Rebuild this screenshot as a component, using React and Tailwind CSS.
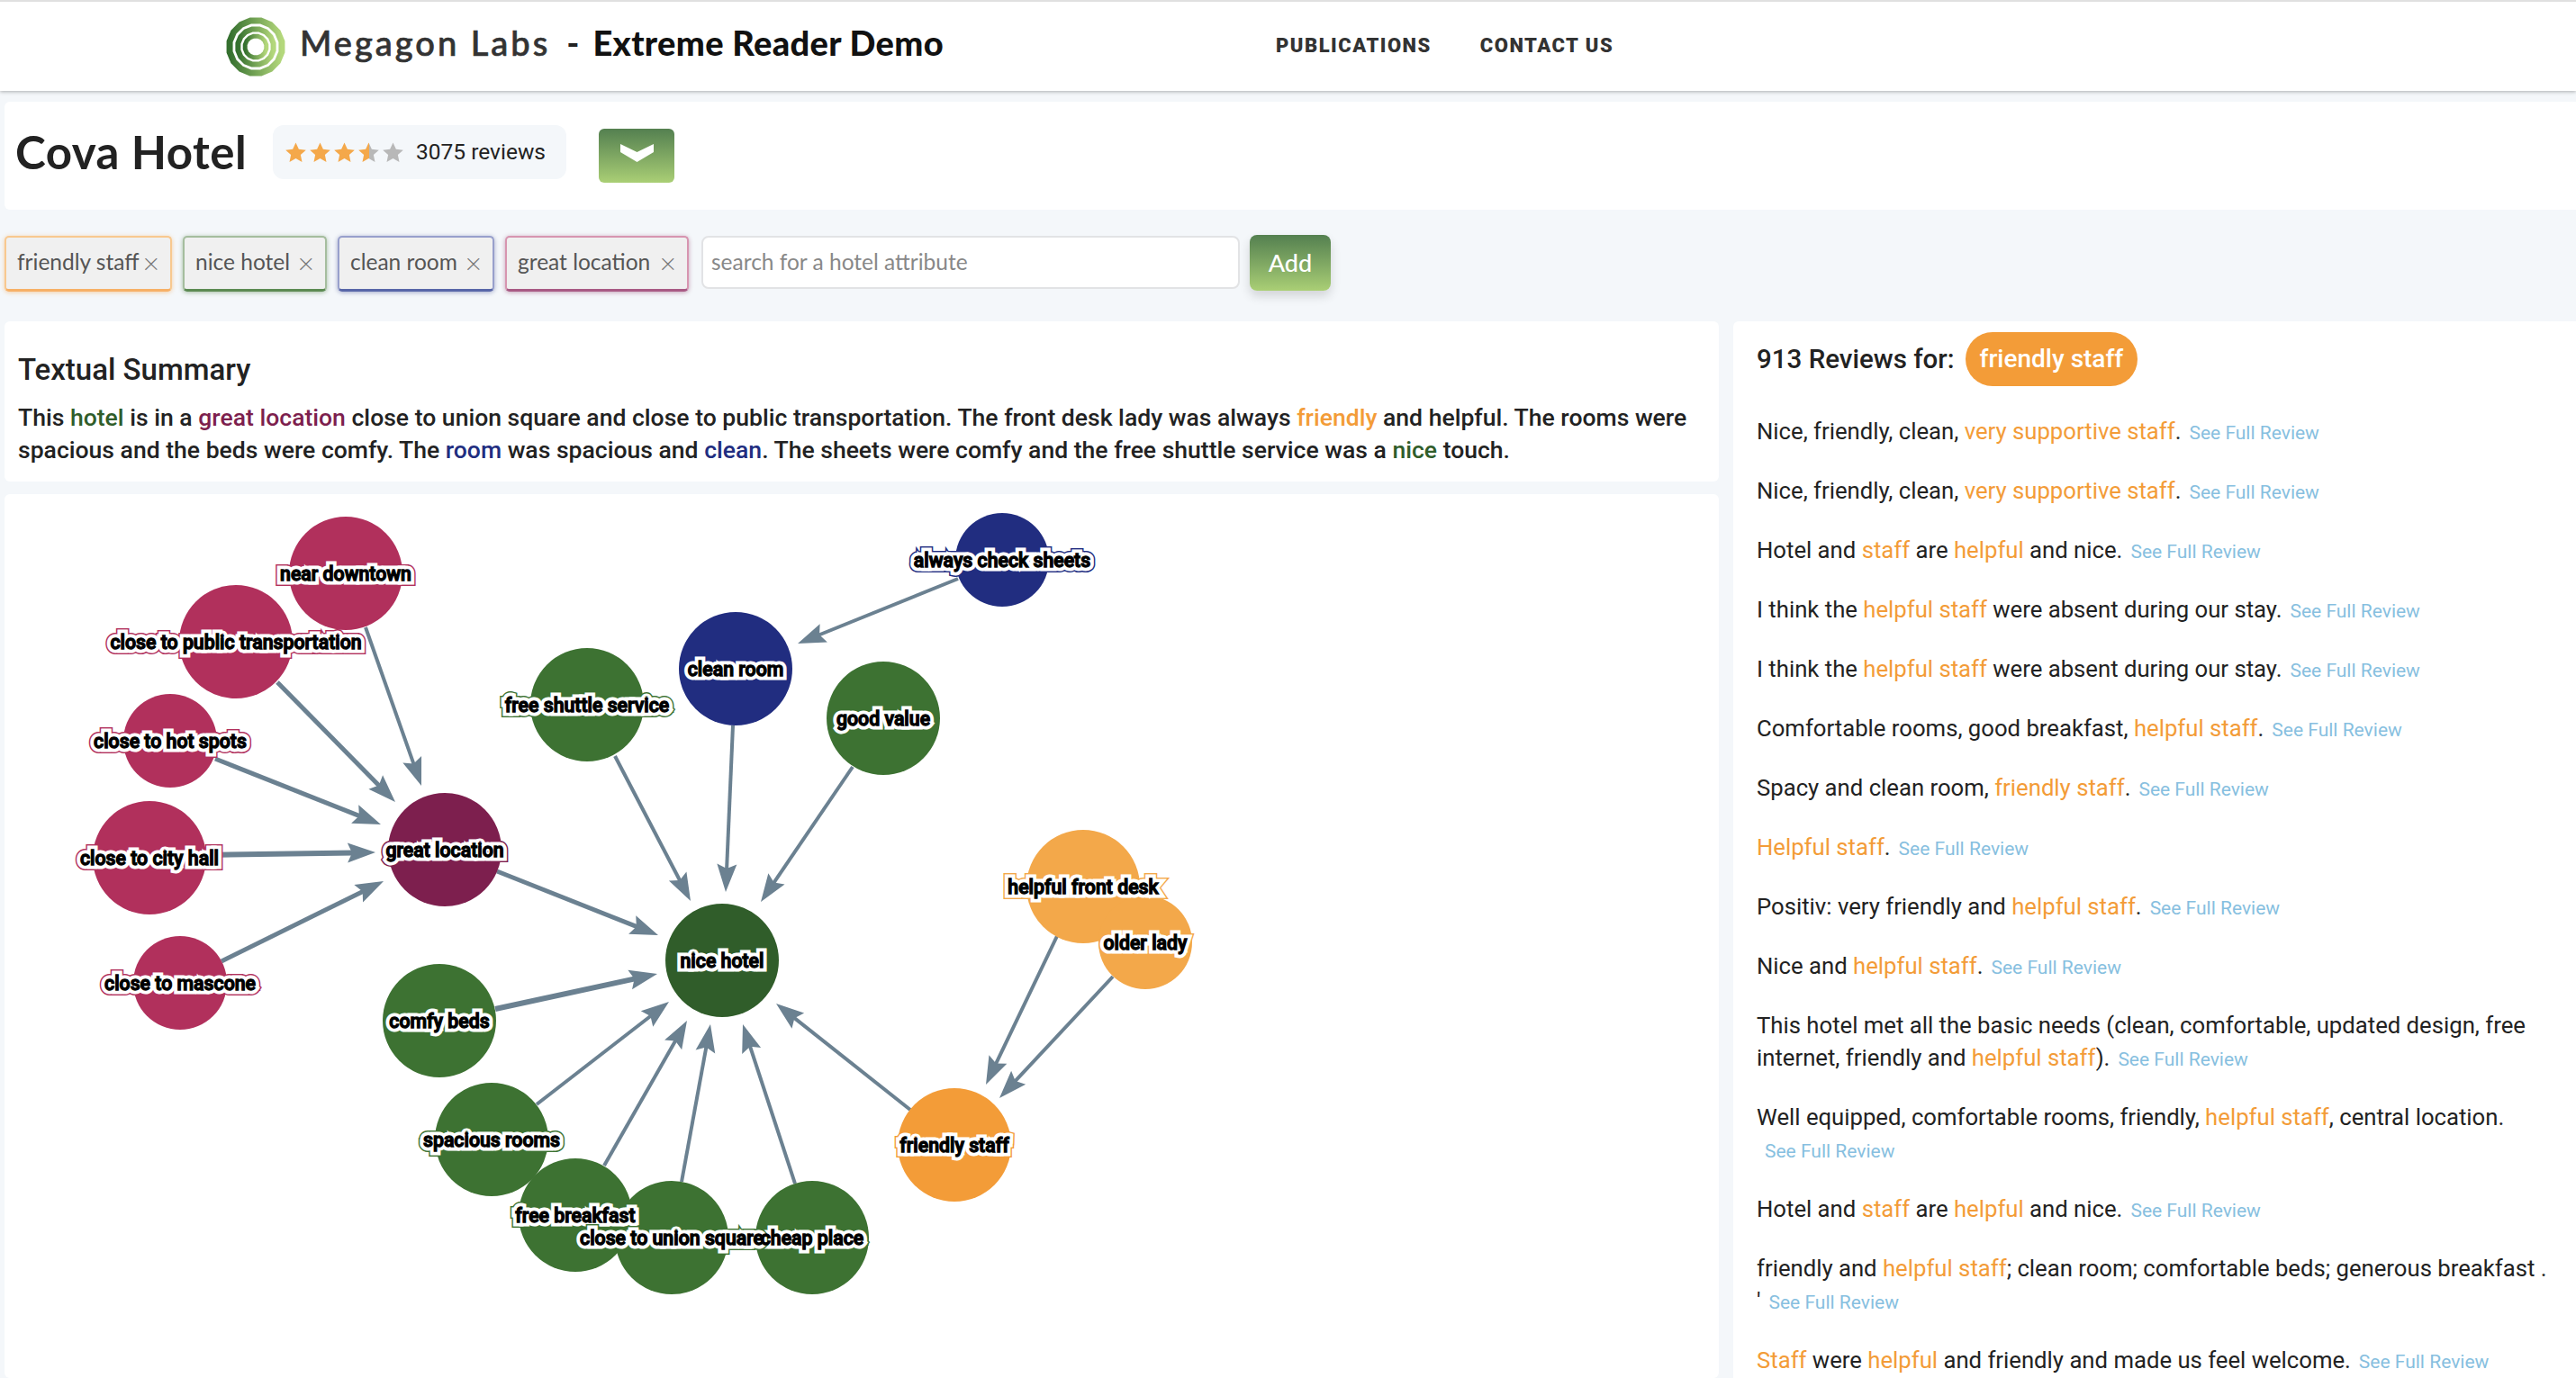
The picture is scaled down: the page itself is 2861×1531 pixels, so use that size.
import { Fragment } from 'react'

const ROSE = '#b1305c'
const WINE = '#7d1f4e'
const GREEN = '#3d7232'
const FOREST = '#305d2a'
const NAVY = '#212d80'
const AMBER = '#f3a84a'
const ORANGE = '#f39c38'

const nodes = [
  { label: 'always check sheets', x: 1113, y: 622, r: 52, fill: NAVY },
  { label: 'near downtown', x: 384, y: 637, r: 63, fill: ROSE },
  { label: 'close to public transportation', x: 262, y: 713, r: 63, fill: ROSE },
  { label: 'clean room', x: 817, y: 743, r: 63, fill: NAVY },
  { label: 'free shuttle service', x: 652, y: 783, r: 63, fill: GREEN },
  { label: 'good value', x: 981, y: 798, r: 63, fill: GREEN },
  { label: 'close to hot spots', x: 189, y: 823, r: 52, fill: ROSE },
  { label: 'great location', x: 494, y: 944, r: 63, fill: WINE },
  { label: 'close to city hall', x: 166, y: 953, r: 63, fill: ROSE },
  { label: 'helpful front desk', x: 1203, y: 985, r: 63, fill: AMBER },
  { label: 'older lady', x: 1272, y: 1047, r: 52, fill: AMBER },
  { label: 'nice hotel', x: 802, y: 1067, r: 63, fill: FOREST },
  { label: 'close to mascone', x: 200, y: 1092, r: 52, fill: ROSE },
  { label: 'comfy beds', x: 488, y: 1134, r: 63, fill: GREEN },
  { label: 'spacious rooms', x: 546, y: 1266, r: 63, fill: GREEN },
  { label: 'friendly staff', x: 1060, y: 1272, r: 63, fill: ORANGE },
  { label: 'free breakfast', x: 639, y: 1350, r: 63, fill: GREEN },
  { label: 'cheap place', x: 902, y: 1375, r: 63, fill: GREEN },
  { label: 'close to union square', x: 746, y: 1375, r: 63, fill: GREEN },
]

// start x, start y, tip x, tip y, stroke width
const edges = [
  [406, 697, 468, 873, 4],
  [308, 758, 439, 891, 5],
  [239, 843, 423, 916, 5],
  [228, 950, 417, 947, 6],
  [246, 1068, 426, 979, 5],
  [552, 968, 731, 1039, 5],
  [550, 1121, 730, 1082, 6],
  [596, 1227, 743, 1113, 4],
  [671, 1295, 763, 1134, 4],
  [757, 1313, 789, 1138, 4],
  [883, 1315, 825, 1138, 4],
  [1011, 1233, 862, 1115, 4],
  [1174, 1040, 1095, 1205, 4],
  [1236, 1085, 1110, 1220, 4],
  [683, 840, 767, 1001, 4],
  [814, 806, 806, 991, 4],
  [947, 852, 845, 1002, 4],
  [1064, 643, 886, 715, 4],
]

const reviews = [
  'Nice, friendly, clean, *very supportive staff*.',
  'Nice, friendly, clean, *very supportive staff*.',
  'Hotel and *staff* are *helpful* and nice.',
  'I think the *helpful staff* were absent during our stay.',
  'I think the *helpful staff* were absent during our stay.',
  'Comfortable rooms, good breakfast, *helpful staff*.',
  'Spacy and clean room, *friendly staff*.',
  '*Helpful staff*.',
  'Positiv: very friendly and *helpful staff*.',
  'Nice and *helpful staff*.',
  'This hotel met all the basic needs (clean, comfortable, updated design, free internet, friendly and *helpful staff*).',
  'Well equipped, comfortable rooms, friendly, *helpful staff*, central location.',
  'Hotel and *staff* are *helpful* and nice.',
  "friendly and *helpful staff*; clean room; comfortable beds; generous breakfast . '",
  '*Staff* were *helpful* and friendly and made us feel welcome.',
]

const tags = [
  { label: 'friendly staff', className: 'w-[186px] border-[#f8c88f] border-b-[#f7b066] shadow-[0_1px_5px_rgba(243,156,56,0.45)]' },
  { label: 'nice hotel', className: 'w-[160px] border-[#a5bd9e] border-b-[#5c8a52] shadow-[0_1px_5px_rgba(61,114,50,0.45)]' },
  { label: 'clean room', className: 'w-[174px] border-[#98a0cc] border-b-[#5866a8] shadow-[0_1px_5px_rgba(33,45,128,0.4)]' },
  { label: 'great location', className: 'w-[204px] border-[#d795b0] border-b-[#a85a84] shadow-[0_1px_5px_rgba(125,31,78,0.4)]' },
]

function Logo() {
  const ring = (r) => {
    const pts = []
    for (let i = 0; i < 16; i++) {
      const a = ((i + 0.5) * Math.PI) / 8
      pts.push(`${(33 + r * Math.cos(a)).toFixed(2)},${(33 + r * Math.sin(a)).toFixed(2)}`)
    }
    return pts.join(' ')
  }
  return (
    <svg className="w-[66px] h-[66px] shrink-0" viewBox="0 0 66 66">
      <defs>
        <linearGradient id="logoFade" x1="0" y1="0" x2="1" y2="0">
          <stop offset="0" stopColor="#35702f" />
          <stop offset="1" stopColor="#b4d87c" />
        </linearGradient>
      </defs>
      <polygon points={ring(29.5)} fill="none" stroke="url(#logoFade)" strokeWidth="7" />
      <polygon points={ring(20)} fill="none" stroke="url(#logoFade)" strokeWidth="6" />
      <polygon points={ring(12)} fill="none" stroke="url(#logoFade)" strokeWidth="5" />
    </svg>
  )
}

function Star({ fill }) {
  return (
    <svg className="w-[23px] h-[23px]" viewBox="0 0 24 24">
      <defs>
        <linearGradient id="halfStar" x1="0" y1="0" x2="1" y2="0">
          <stop offset="0.5" stopColor="#f4a84a" />
          <stop offset="0.5" stopColor="#b8b8b8" />
        </linearGradient>
      </defs>
      <polygon points="12,0.5 15.5,8.2 23.8,9.1 17.6,14.7 19.3,23 12,18.8 4.7,23 6.4,14.7 0.2,9.1 8.5,8.2" fill={fill} />
    </svg>
  )
}

function Edge({ edge }) {
  const [x1, y1, x2, y2, width] = edge
  const len = Math.hypot(x2 - x1, y2 - y1)
  const ux = (x2 - x1) / len
  const uy = (y2 - y1) / len
  const at = (back, side) => `${x2 - ux * back - uy * side},${y2 - uy * back + ux * side}`
  return (
    <g>
      <line x1={x1} y1={y1} x2={x2 - ux * 24} y2={y2 - uy * 24} stroke="#6b8191" strokeWidth={width} />
      <polygon points={`${at(0, 0)} ${at(31, 11)} ${at(26, 0)} ${at(31, -11)}`} fill="#6b8191" />
    </g>
  )
}

function Graph() {
  return (
    <svg className="block w-[1904px] h-[982px]" viewBox="5 549 1904 982">
      {edges.map((edge, i) => <Edge key={i} edge={edge} />)}
      {nodes.map((node) => <circle key={node.label} cx={node.x} cy={node.y} r={node.r} fill={node.fill} />)}
      <g
        className="font-['Roboto',sans-serif] font-medium text-[21.3px]"
        textAnchor="middle"
        dominantBaseline="central"
        strokeLinejoin="miter"
        strokeMiterlimit="8"
      >
        {/* halos are clones of the real text further down, so labels sit on top of every halo */}
        {nodes.map((node, i) => (
          <g key={node.label}>
            <use href={`#node-label-${i}`} fill="none" stroke={node.fill} strokeWidth="12" />
            <use href={`#node-label-${i}`} fill="none" stroke="#ffffff" strokeWidth="9" />
          </g>
        ))}
        <g fill="#000000" stroke="#000000" strokeWidth="1.3">
          {nodes.map((node, i) => (
            <text key={node.label} id={`node-label-${i}`} x={node.x} y={node.y}>{node.label}</text>
          ))}
        </g>
      </g>
    </svg>
  )
}

function Review({ text }) {
  const parts = text.split('*')
  return (
    <p className="mb-[30px] leading-[36px] text-[25.7px] text-[#222222]">
      {parts.map((part, i) => (
        <Fragment key={i}>
          {i % 2 === 1 ? <span className="text-[#f39c38]">{part}</span> : part}
        </Fragment>
      ))}
      <a className="inline-block whitespace-nowrap ml-[9px] text-[21px] leading-none text-[#87bfe0]">See Full Review</a>
    </p>
  )
}

export default function App() {
  return (
    <div className="h-screen overflow-hidden bg-[#f4f7fa] font-['Roboto',sans-serif]">
      <header className="h-[101px] border-t-2 border-[#e0e0e0] bg-white shadow-[0_1px_4px_rgba(0,0,0,0.3)] flex items-center pl-[251px]">
        <Logo />
        <div className="ml-[16px] pb-[8px] font-['Lato',sans-serif] text-[38px] text-[#333333] tracking-[3px] font-medium [-webkit-text-stroke:0.7px_#333333]">Megagon Labs</div>
        <div className="ml-[18px] pb-[8px] font-['Lato',sans-serif] text-[38px] text-[#222222] font-bold">-</div>
        <div className="ml-[15px] pb-[8px] font-['Lato',sans-serif] text-[38px] text-[#111111] font-black tracking-[0.35px]">Extreme Reader Demo</div>
        <nav className="ml-[369px] pb-[3px] flex gap-[54px] text-[22px] font-black tracking-[1.5px] text-[#333333]">
          <span>PUBLICATIONS</span>
          <span>CONTACT US</span>
        </nav>
      </header>

      <section className="mt-[12px] ml-[5px] h-[120px] bg-white rounded-l-md flex items-start pl-[12px]">
        <h1 className="mt-[20px] w-[286px] font-['Lato',sans-serif] text-[51px] tracking-[0.5px] leading-[72px] font-bold text-[#222222]">Cova Hotel</h1>
        <div className="mt-[26px] w-[326px] h-[60px] bg-[#f4f7fa] rounded-xl flex items-center pl-[14px]">
          <div className="flex gap-[4px]">
            <Star fill="#f4a84a" />
            <Star fill="#f4a84a" />
            <Star fill="#f4a84a" />
            <Star fill="url(#halfStar)" />
            <Star fill="#b8b8b8" />
          </div>
          <span className="ml-[14px] text-[24.5px] text-[#222222]">3075 reviews</span>
        </div>
        <button className="ml-[36px] mt-[30px] pb-[6px] w-[84px] h-[60px] rounded-md bg-linear-to-b from-[#548050] to-[#aacf75] flex items-center justify-center">
          <svg className="w-[37px] h-[20px]" viewBox="0 0 37 20">
            <polygon points="0,0 18.5,9 37,0 37,9 18.5,20 0,9" fill="#ffffff" />
          </svg>
        </button>
      </section>

      <section className="mt-[29px] ml-[5px] flex items-start gap-[12px] font-['Lato',sans-serif] text-[24.5px]">
        {tags.map((tag) => (
          <div key={tag.label} className={`h-[62px] px-[12px] pb-[2px] flex items-center justify-between rounded-[5px] bg-[#f0f0f0] border-2 border-b-[3px] text-[#555555] ${tag.className}`}>
            <span>{tag.label}</span>
            <span className="text-[32px] leading-none font-light text-[#777777]">×</span>
          </div>
        ))}
        <div className="ml-[2px] w-[598px] h-[59px] rounded-lg bg-white border-2 border-[#e2e3e5] flex items-center pl-[9px] text-[#888888]">
          search for a hotel attribute
        </div>
        <button className="-ml-[1px] w-[90px] h-[62px] -mt-[1px] rounded-lg bg-linear-to-b from-[#548050] to-[#aacf75] text-white text-[27px] font-medium shadow-[0_6px_12px_rgba(0,0,0,0.14)]">
          Add
        </button>
      </section>

      <main className="mt-[33px] ml-[5px] flex items-start gap-[16px]">
        <div className="w-[1904px] flex flex-col gap-[14px] shrink-0">
          <section className="h-[178px] bg-white rounded-md px-[15px] pt-[33px]">
            <h2 className="text-[33px] leading-[42px] font-medium text-[#222222]">Textual Summary</h2>
            <p className="mt-[14px] text-[26.55px] leading-[36px] font-medium text-[#222222]">
              This <span className="text-[#305d2a]">hotel</span> is in a <span className="text-[#7d1f4e]">great location</span> close to union square and close to public transportation. The front desk lady was always <span className="text-[#f39c38]">friendly</span> and helpful. The rooms were spacious and the beds were comfy. The <span className="text-[#212d80]">room</span> was spacious and <span className="text-[#212d80]">clean</span>. The sheets were comfy and the free shuttle service was a <span className="text-[#305d2a]">nice</span> touch.
            </p>
          </section>
          <section className="bg-white rounded-md">
            <Graph />
          </section>
        </div>

        <aside className="flex-1 min-w-0 bg-white rounded-l-md pl-[26px] pr-[26px] pt-[12px] min-h-[1174px]">
          <div className="flex items-center gap-[12px] h-[60px]">
            <span className="text-[29.5px] font-medium text-[#222222]">913 Reviews for:</span>
            <span className="h-[60px] px-[16px] rounded-[30px] bg-[#f39c38] text-white text-[28px] font-medium flex items-center">friendly staff</span>
          </div>
          <div className="mt-[32px]">
            {reviews.map((text, i) => <Review key={i} text={text} />)}
          </div>
        </aside>
      </main>
    </div>
  )
}
